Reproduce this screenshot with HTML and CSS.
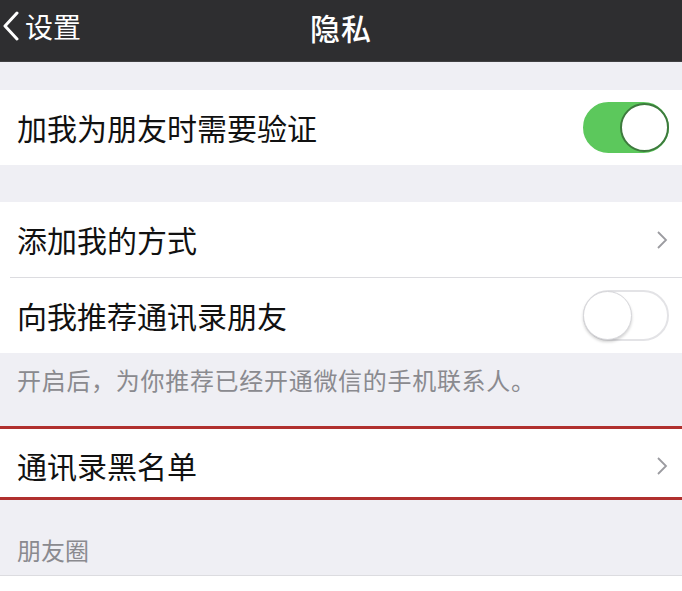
FILE: index.html
```html
<!DOCTYPE html>
<html lang="zh-CN">
<head>
  <meta charset="UTF-8">
  <meta name="viewport" content="width=device-width, initial-scale=1.0">
  <title>隐私</title>
  <link rel="stylesheet" href="styles.css">
</head>
<body>
  <header class="nav">
    <a class="nav-back" href="#">
      <svg class="back-icon" viewBox="0 0 18 30" width="18" height="30">
        <path d="M15 2 L3 15 L15 28" fill="none" stroke="#fff" stroke-width="3" stroke-linecap="round" stroke-linejoin="round"/>
      </svg>
      <span>设置</span>
    </a>
    <h1 class="nav-title">隐私</h1>
  </header>

  <section class="group group-first">
    <div class="row">
      <span class="row-label">加我为朋友时需要验证</span>
      <span class="switch switch-on"><span class="knob"></span></span>
    </div>
  </section>

  <section class="group group-second">
    <div class="row">
      <span class="row-label">添加我的方式</span>
      <svg class="chevron" viewBox="0 0 12 18" width="12" height="18">
        <path d="M2 1 L10 9 L2 17" fill="none" stroke="#9b9ba0" stroke-width="1.8"/>
      </svg>
    </div>
    <div class="row row-sep">
      <span class="row-label">向我推荐通讯录朋友</span>
      <span class="switch"><span class="knob"></span></span>
    </div>
  </section>
  <p class="note">开启后，为你推荐已经开通微信的手机联系人。</p>

  <section class="group group-marked">
    <div class="row row-short">
      <span class="row-label">通讯录黑名单</span>
      <svg class="chevron" viewBox="0 0 12 18" width="12" height="18">
        <path d="M2 1 L10 9 L2 17" fill="none" stroke="#9b9ba0" stroke-width="1.8"/>
      </svg>
    </div>
  </section>

  <p class="section-head">朋友圈</p>
  <section class="group group-last"></section>
</body>
</html>
```

FILE: styles.css
```css
* {
  box-sizing: border-box;
}
body {
  margin: 0;
  background-color: #efeff4;
  font-family: "Noto Sans CJK SC", "Noto Sans", sans-serif;
  color: #111;
  overflow: hidden;
}
.nav {
  height: 62px;
  background-color: #2e2e30;
  border-bottom: 1px solid #404042;
  display: flex;
  align-items: center;
  justify-content: center;
  position: relative;
}
.nav-back {
  position: absolute;
  left: 2px;
  top: 10px;
  display: flex;
  align-items: center;
  gap: 5px;
  color: #fff;
  text-decoration: none;
  font-size: 28px;
  line-height: 32px;
}
.back-icon {
  display: block;
}
.nav-title {
  margin: 0;
  margin-top: -8px;
  color: #fff;
  font-size: 30px;
  font-weight: 500;
  letter-spacing: 1px;
}
.group {
  background-color: #fff;
}
.group-first {
  margin-top: 28px;
}
.group-second {
  margin-top: 37px;
}
.row {
  height: 75px;
  display: flex;
  align-items: center;
  justify-content: space-between;
  padding: 0 13px 0 17px;
  position: relative;
}
.row-sep::before {
  content: "";
  position: absolute;
  left: 10px;
  right: 0;
  top: 0;
  height: 1px;
  background-color: #dcdce0;
}
.row-sep {
  height: 76px;
  padding-top: 1px;
}
.row-label {
  font-size: 30px;
  line-height: 36px;
  margin-top: -2px;
}
.chevron {
  display: block;
  margin-right: 1px;
}
.switch {
  width: 86px;
  height: 51px;
  border-radius: 26px;
  border: 2px solid #e3e3e6;
  background-color: #fff;
  display: flex;
  align-items: center;
  padding: 0;
}
.switch .knob {
  width: 49px;
  height: 49px;
  border-radius: 50%;
  background-color: #fff;
  border: 1px solid #d6d6da;
  box-shadow: 0 2px 3px rgba(0, 0, 0, 0.18);
  margin-left: -2px;
}
.switch-on {
  background-color: #5cc85c;
  border-color: #5cc85c;
  justify-content: flex-end;
}
.switch-on .knob {
  margin-left: 0;
  margin-right: -2px;
  border: 2px solid #3d7a3d;
  box-shadow: none;
}
.note {
  margin: 0;
  height: 73px;
  padding: 13px 0 0 17px;
  font-size: 24px;
  line-height: 28px;
  letter-spacing: 0.7px;
  color: #8a8a8f;
}
.group-marked {
  border-top: 3px solid #b0302e;
  border-bottom: 3px solid #b0302e;
}
.row-short {
  height: 68px;
  padding-top: 6px;
}
.section-head {
  margin: 0;
  height: 76px;
  padding: 36px 0 0 17px;
  font-size: 24px;
  line-height: 28px;
  color: #8a8a8f;
  border-bottom: 1px solid #dcdce0;
}
.group-last {
  height: 40px;
}
```
